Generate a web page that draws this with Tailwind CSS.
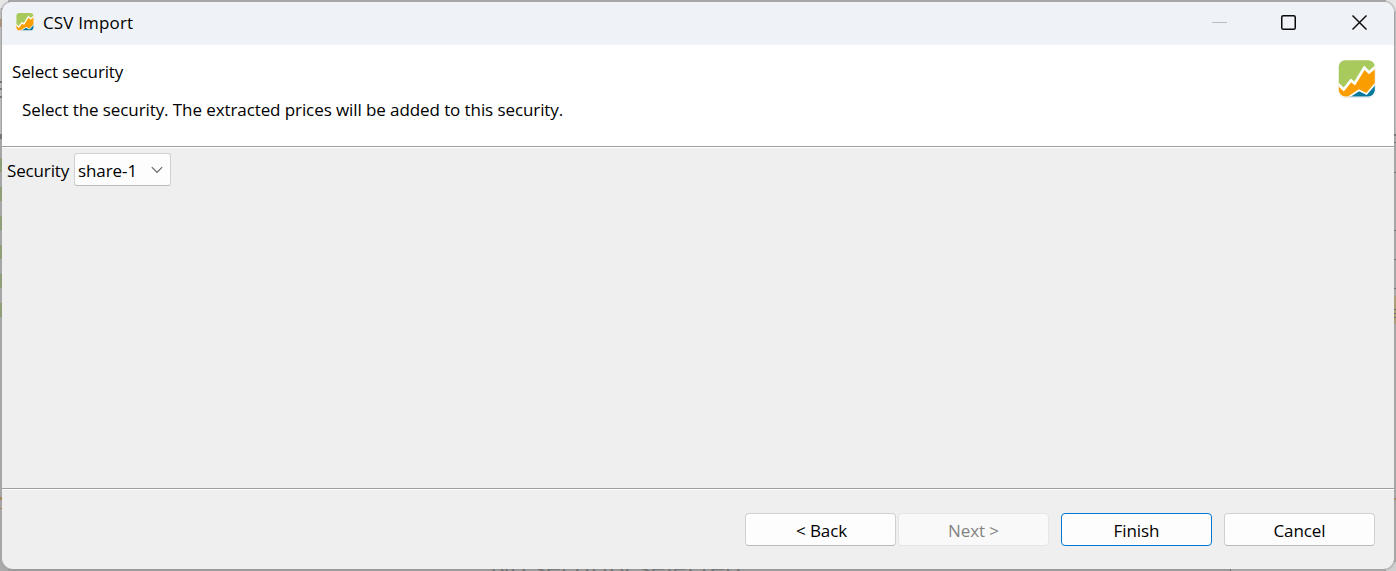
<!DOCTYPE html>
<html lang="en">
<head>
<meta charset="utf-8">
<title>CSV Import</title>
<script src="https://cdn.jsdelivr.net/npm/@tailwindcss/browser@4"></script>
</head>
<body class="relative h-[571px] w-[1396px] overflow-hidden bg-[#ababab] font-['Open_Sans','Noto_Sans',sans-serif] text-[17px] leading-6 tracking-[-0.09px] text-black">
<!-- Slivers of the application behind the dialog -->
<svg class="absolute inset-0" width="1396" height="571" viewBox="0 0 1396 571" shape-rendering="crispEdges">
  <path fill="#e6e6e6" d="M0 0h8v8H0zM1386 0h10v12h-10z"/>
  <path fill="#d0d0d0" d="M0 8h1v130H0zM1395 10h1v125h-1zM1386 562h10v9h-10z"/>
  <path fill="#b08a60" d="M0 19h2v8H0z"/>
  <path fill="#555" d="M0 81h2v2H0zM0 88h2v2H0zM0 96h2v2H0zM0 134h2v5H0zM1394 134h2v2h-2zM1394 142h2v1h-2zM1394 172h2v1h-2zM1394 230h2v1h-2zM1394 259h2v1h-2zM1394 288h2v1h-2z"/>
  <path fill="#7f9d5a" d="M0 158h2v14H0zM0 187h2v14H0zM0 216h2v14H0zM0 245h2v14H0zM0 274h2v14H0zM0 303h2v14H0z"/>
  <path fill="#b59d5c" d="M1394 296h2v28h-2z"/>
  <path fill="#444" d="M1394 309h2v1h-2zM1394 313h2v1h-2zM1394 317h2v1h-2zM1230 569h1v2h-1z"/>
  <path fill="#a8722e" d="M0 497h2v3H0zM0 508h2v1H0zM1394 498h2v2h-2z"/>
  <path fill="#979797" d="M8 569h1222v2H8z"/>
</svg>
<div class="absolute left-[490px] top-[551px] whitespace-nowrap text-[27px] leading-8 text-[#555]">No security selected</div>

<main class="relative ml-[2px] flex h-[571px] w-[1392px] flex-col pt-[2px] pb-[2px]">
<div class="flex flex-1 flex-col overflow-hidden rounded-[11px] bg-[#efefef] shadow-[0_0_0_2px_#a0a0a070]">
  <header class="flex h-[43px] shrink-0 items-center bg-[#eff3f8] pl-[14px]">
    <svg class="mt-[-3px]" width="18" height="18" viewBox="0 0 38 38"><use href="#logo"/></svg>
    <span class="ml-[9px] mt-[-2px] whitespace-nowrap tracking-[0.15px]">CSV Import</span>
    <div class="ml-auto flex h-full items-center pr-[24px]">
      <svg class="mt-[-4px]" width="160" height="18" viewBox="0 0 160 18" fill="none">
        <path d="M2 9.5h15" stroke="#b9bdc2"/>
        <rect x="71.75" y="2.75" width="13.5" height="13.5" rx="1.6" stroke="#080808" stroke-width="1.5"/>
        <path d="M142.5 2.5l14 14m0-14l-14 14" stroke="#111" stroke-width="1.5"/>
      </svg>
    </div>
  </header>
  <section class="flex h-[101px] shrink-0 justify-between bg-white pr-[18px]">
    <div class="pl-[10px] pt-[15px]">
      <h1 class="w-fit whitespace-nowrap tracking-[-0.15px]">Select security</h1>
      <p class="ml-[10px] mt-[14px] w-fit whitespace-nowrap">Select the security. The extracted prices will be added to this security.</p>
    </div>
    <svg class="mt-[15px]" width="38" height="38" viewBox="0 0 38 38">
      <defs>
        <clipPath id="tile"><rect x="0.8" y="0.2" width="36" height="36.300" rx="6.5"/></clipPath>
        <g id="logo">
          <rect x="0" y="0.500" width="37.600" height="37.500" rx="7.5" fill="#e2e2e2"/>
          <rect x="0.2" y="0" width="37.200" height="37.200" rx="7" fill="#fff"/>
          <g clip-path="url(#tile)">
            <path d="M0 0H38V6.500L31 12.500 26.300 7.700 16.700 23.500 13 20.500 5.700 29.500 0 24z" fill="#a8ca5c"/>
            <path d="M0 24L5.700 29.500 13 20.500 16.700 23.500 26.300 7.700 31 12.500 38 6.500V23L28.500 34 21 30.300 10 37.500H0z" fill="#f99d00"/>
            <path d="M10 37.500L21 30.300 28.500 34 38 23V38H10z" fill="#07799b"/>
            <path d="M0 24L5.700 29.500 13 20.500 16.700 23.500 26.300 7.700 31 12.500 38 6.500" fill="none" stroke="#fff" stroke-width="2.700"/>
            <path d="M10 37.500L21 30.300 28.500 34 38 23" fill="none" stroke="#fff" stroke-width="1.800"/>
          </g>
        </g>
      </defs>
      <use href="#logo"/>
    </svg>
  </section>
  <section class="h-[342px] shrink-0 border-t border-[#a0a0a0]">
    <div class="flex items-center border-t border-white pl-[5px] pt-[5px]">
      <label class="w-[67px] whitespace-nowrap pt-[2px] tracking-[-0.15px]">Security</label>
      <div class="flex h-[33px] w-[97px] items-center justify-between rounded-[3px] border border-[#d0d0d0] border-b-[#bcbcbc] bg-[#fdfdfd] pl-[3px] pr-[7px]">
        <span class="whitespace-nowrap pt-[2px]">share-1</span>
        <svg width="12" height="8" viewBox="0 0 12 8" fill="none"><path d="M.8 1.200l5.200 5.200 5.200-5.200" stroke="#666" stroke-width="1.200"/></svg>
      </div>
    </div>
  </section>
  <footer class="flex flex-1 border-t border-[#a0a0a0]">
    <div class="flex flex-1 justify-end border-t border-white pr-[19px] pt-[23px]">
      <button class="h-[33px] w-[151px] rounded-[4px] border border-[#d0d0d0] border-b-[#bababa] bg-[#fdfdfd] pl-[2px] pt-[2px]"><span>&lt; Back</span></button>
      <button class="ml-[2px] h-[33px] w-[151px] rounded-[4px] border border-[#e5e5e5] bg-[#f9f9f9] pt-[2px] text-[#838383]"><span>Next &gt;</span></button>
      <button class="ml-[12px] h-[33px] w-[151px] rounded-[4px] border border-[#0078d4] bg-[#fdfdfd] pt-[2px]"><span>Finish</span></button>
      <button class="ml-[12px] h-[33px] w-[151px] rounded-[4px] border border-[#d0d0d0] border-b-[#bababa] bg-[#fdfdfd] pt-[2px]"><span>Cancel</span></button>
    </div>
  </footer>
</div>
</main>
</body>
</html>
